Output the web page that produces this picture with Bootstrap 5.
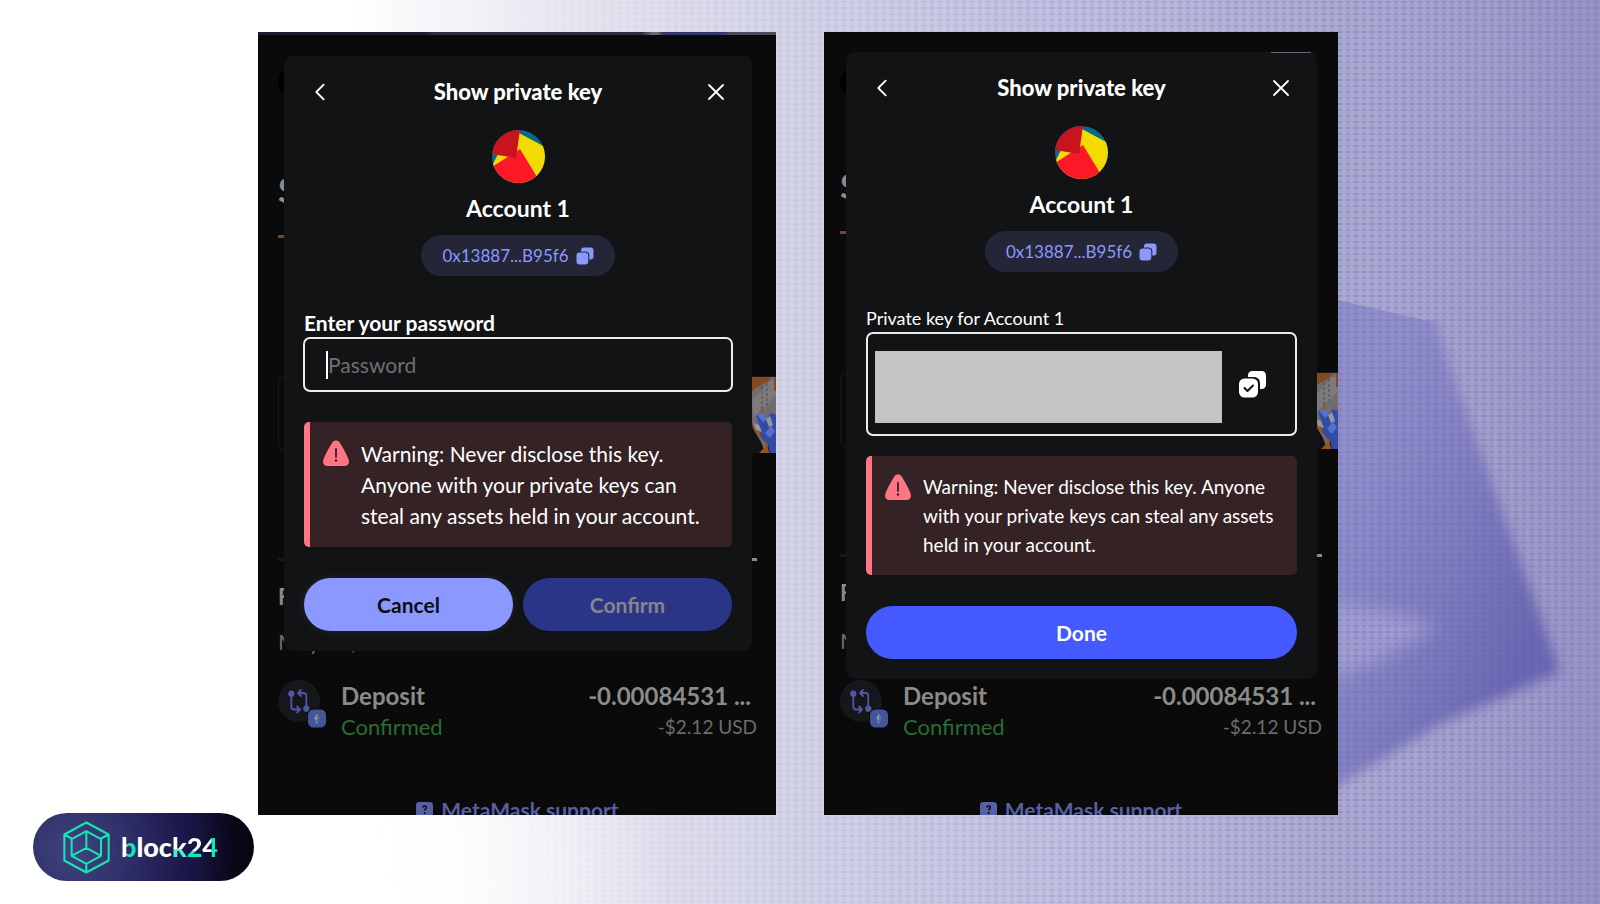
<!DOCTYPE html>
<html lang="en">
<head>
<meta charset="utf-8">
<meta name="viewport" content="width=device-width, initial-scale=1">
<title>Show private key</title>
<link rel="stylesheet" href="https://cdn.jsdelivr.net/npm/bootstrap@5.3.0/dist/css/bootstrap.min.css">
<style>
  :root { --ink: #0a0a0a; --sheet: #121314; --violet: #8b99ff; --mint: #14e8b5; }
  body { font-family: Lato, "Open Sans", sans-serif; background: #fff; }
  .page { height: 100vh; min-height: 840px; isolation: isolate; }
  .backdrop-art { z-index: -1; }
  .stage { padding: 32px 16.375% 0 16.125%; gap: 48px; min-height: 0; }

  /* phone panels: wallet screen and dialog share one grid cell */
  .panel { display: grid; grid-template: minmax(0, 1fr) / minmax(0, 1fr); background: var(--ink); overflow: hidden; flex: 518 1 0; }
  .panel > * { grid-area: 1 / 1; }
  .panel-key { flex-grow: 514; }
  .wallet { padding: 0 19px 0 20px; color: #8b8b8b; font-size: 22px; }
  .panel-key .wallet { padding: 0 16px; }
  .strip { height: 3px; margin: 0 -20px; background: linear-gradient(90deg, #1a1c33 0 32%, #2b2f45 34% 74%, #6a6a70 76% 77%, #35386a 78% 90%, #4a4c5c 91%); }
  .panel-key .strip { background: none; }
  .menu-dot { width: 30px; height: 30px; margin-top: 32px; background: #000; }
  .heading { font-size: 34px; line-height: 40px; margin-top: 73px; }
  .panel-key .heading { margin-top: 69px; }
  .tab-mark { width: 60px; height: 3px; margin-top: 25px; background: #7a4526; }
  .asset { height: 76px; margin: 138px -19px 0 0; border: 1px solid #17181c; border-right: 0; border-radius: 8px 0 0 8px; }
  .asset svg { width: 43px; height: 76px; }
  .panel-key .asset { margin-right: -16px; }
  .divider { height: 3px; margin-top: 106px; background: linear-gradient(90deg, #17181c 50%, #8b8b8b 50%); }
  .section-name { line-height: 30px; margin-top: 21px; }
  .day { line-height: 30px; margin-top: 15px; color: #6c6c70; }
  .panel-key .day { margin-top: 18px; }
  .entry { margin-top: 23px; gap: 21px; }
  .panel-key .entry { margin-top: 24px; }
  .tx-icon { width: 42px; height: 42px; overflow: visible; }
  .entry-line { line-height: 31px; }
  .entry-title { font-size: 24px; }
  .entry-amount { padding-right: 6px; }
  .entry-state { color: #2b6b35; }
  .entry-fiat { font-size: 19px; color: #6c6c70; }
  .support { margin-top: 53px; gap: 8px; font-size: 21px; line-height: 30px; color: #5660a6; text-decoration: none; }

  .sheet { align-self: start; margin: 24px 24px 0 26px; padding: 16px 20px 20px; background: var(--sheet); color: #fff; border-radius: 9px; position: relative; }
  .panel-key .sheet { margin: 20px 21px 0 22px; }
  .sheen { position: absolute; top: 0; right: 6px; width: 40px; height: 1px; background: #6c6a78; }
  .sheet-head { height: 40px; }
  .sheet-title { font-size: 22px; font-weight: 900; }
  .icon-btn { width: 32px; height: 32px; padding: 0; border: 0; background: none; color: #fff; line-height: 1; }
  .icon-btn svg { display: block; margin: auto; }
  .avatar { width: 53px; height: 53px; margin-top: 18px; }
  .account { font-size: 23px; line-height: 36px; margin: 7px 0 1px; }
  .address { height: 41px; margin-top: 8px; padding: 0 21px; gap: 7px; border: 0; border-radius: 21px; background: #242638; color: var(--violet); font-size: 17px; }
  .field-label { margin: 34px 0 1px; font-size: 21px; line-height: 26px; font-weight: 700; }
  .panel-key .field-label { margin-top: 33px; font-size: 18px; font-weight: 400; }
  .field { border: 2px solid #ececec; border-radius: 7px; margin: 0 -1px; }
  .panel-key .field { margin: 0; }
  .secret-field { height: 55px; padding: 0 21px; }
  .caret { width: 2px; height: 28px; background: #fff; }
  .secret-field input { font-size: 21px; color: #fff; background: none; border: 0; padding: 0; outline: 0; min-width: 0; }
  .secret-field input::placeholder { color: #706f73; }
  .key-field { height: 104px; padding: 17px 27px 11px 7px; }
  .key-field input { height: 72px; min-width: 0; border: 0; background: #c4c4c4; }
  .copy-key { margin-left: 14px; margin-bottom: 6px; }
  .warning { margin-top: 30px; padding: 16px 16px 16px 13px; gap: 12px; border-left: 6px solid #ff7584; border-radius: 5px; background: #352225; font-size: 21px; line-height: 31px; }
  .panel-key .warning { margin-top: 20px; font-size: 19px; line-height: 29px; }
  .warning svg { margin-top: 2px; }
  .actions { margin-top: 31px; gap: 10px; }
  .pill-btn { height: 53px; border: 0; border-radius: 27px; font-size: 21px; font-weight: 700; padding: 0; }
  .pill-cancel, .pill-cancel:hover { background: var(--violet); color: #0c0d12; box-shadow: 0 0 8px #8b99ff22; }
  .pill-confirm:disabled { background: #2b3587; color: #85868c; opacity: 1; }
  .pill-done, .pill-done:hover { background: #4459ff; color: #fff; }

  .foot { height: 89px; padding: 0 0 23px 33px; }
  .brand { width: 221px; height: 68px; padding-left: 30px; gap: 11px; border-radius: 34px; text-decoration: none; font-size: 27px; font-weight: 900; color: #fff;
    background: linear-gradient(90deg, transparent 74%, #08060f 98%), radial-gradient(circle at 18% 55%, #42437f 0, #2f2f69 30%, #1b184b 60%, #0d0a2c 95%); }
  .brand span span { background-clip: text; -webkit-background-clip: text; color: transparent; }
  .ch-b { background-image: linear-gradient(90deg, #fff 34%, var(--mint) 42%); }
  .ch-k { background-image: linear-gradient(#fff 56%, #4deec8 60%); }
  .ch-2 { background-image: linear-gradient(#fff 62%, var(--mint) 66%); }
  .ch-4 { background-image: linear-gradient(90deg, #fff 56%, var(--mint) 60%); }
</style>
</head>
<body>
<div class="page d-flex flex-column position-relative overflow-hidden">

  <svg class="backdrop-art position-absolute top-0 start-0 w-100 h-100" viewBox="0 0 1600 904" preserveAspectRatio="none" aria-hidden="true">
    <defs>
      <linearGradient id="wash" gradientUnits="userSpaceOnUse" x1="350" y1="0" x2="1610" y2="0">
        <stop offset="0" stop-color="#fff"/><stop offset=".2" stop-color="#e3e3ef"/><stop offset=".38" stop-color="#d1d1e6"/>
        <stop offset=".55" stop-color="#c1c1df"/><stop offset=".76" stop-color="#adadd3"/><stop offset=".88" stop-color="#a3a1cb"/><stop offset="1" stop-color="#9693c5"/>
      </linearGradient>
      <linearGradient id="shape" gradientUnits="userSpaceOnUse" x1="1330" y1="520" x2="1540" y2="600">
        <stop offset="0" stop-color="#918fcb"/><stop offset=".5" stop-color="#827fc0"/><stop offset="1" stop-color="#6b68b3"/>
      </linearGradient>
      <linearGradient id="fade" x1="0" x2="1" y1="0" y2="0"><stop offset=".3" stop-color="#000"/><stop offset=".85" stop-color="#fff"/></linearGradient>
      <mask id="weaveMask"><rect width="1600" height="904" fill="url(#fade)"/></mask>
      <pattern id="weave" width="16" height="6" patternUnits="userSpaceOnUse">
        <path d="M1 2h5M9 2h6" stroke="#5f5ca8" stroke-opacity=".2" stroke-width="2"/>
        <path d="M4 0v6M12 0v6" stroke="#5f5ca8" stroke-opacity=".1" stroke-width="3"/>
      </pattern>
      <filter id="soft" x="-10%" y="-10%" width="120%" height="120%"><feGaussianBlur stdDeviation="6"/></filter>
      <filter id="softer" x="-30%" y="-30%" width="160%" height="160%"><feGaussianBlur stdDeviation="9"/></filter>
      <radialGradient id="corner"><stop offset="0" stop-color="#fff"/><stop offset=".4" stop-color="#fff" stop-opacity=".8"/><stop offset="1" stop-color="#fff" stop-opacity="0"/></radialGradient>
      <clipPath id="shapeTop"><path d="M1200 282 1338 300 1424 320 1640 320V904H1200Z"/></clipPath>
    </defs>
    <rect width="1600" height="904" fill="url(#wash)"/>
    <ellipse cx="340" cy="904" rx="330" ry="420" fill="url(#corner)"/>
    <g clip-path="url(#shapeTop)">
      <path d="M1250 280H1424L1450 368 1560 672 1440 724 1340 784 1320 800H1250Z" fill="url(#shape)" filter="url(#soft)"/>
      <path d="M1290 594 1400 614 1440 626 1380 660 1300 690Z" fill="#a9a7d4" opacity=".7" filter="url(#softer)"/>
    </g>
    <g mask="url(#weaveMask)"><rect width="1600" height="904" fill="url(#weave)"/></g>
  </svg>

  <svg class="d-none" aria-hidden="true">
    <symbol id="i-back" viewBox="0 0 24 24"><path d="M16 4 8 12l8 8" fill="none" stroke="currentColor" stroke-width="2" stroke-linecap="round" stroke-linejoin="round"/></symbol>
    <symbol id="i-close" viewBox="0 0 24 24"><path d="M5 5 19 19M19 5 5 19" fill="none" stroke="currentColor" stroke-width="1.8" stroke-linecap="round"/></symbol>
    <symbol id="i-avatar" viewBox="0 0 53 53">
      <path d="M0 0h53v53H0z" fill="#07698c"/>
      <path d="M27 3 53 17V53H0V36L6 24 20 10Z" fill="#f3da03"/>
      <path d="M0 37 17 26 28 19 45 47 40 53H0Z" fill="#fc1927"/>
      <path d="M28 0 24 28 0 24V0Z" fill="#c8141e"/>
    </symbol>
    <symbol id="i-copy" viewBox="0 0 18 18"><path d="M5 4.500V3.500C5 1.500 6 .5 8 .5h6.500c2 0 3 1 3 3v6c0 2-1 3-3 3h-1.200V8.500c0-3-1.300-4-4-4Z" fill="currentColor"/><rect x=".5" y="5.500" width="11.800" height="12" rx="3.200" fill="currentColor"/></symbol>
    <symbol id="i-copied" viewBox="0 0 27 27"><path d="M9 6V5c0-3.500 1.500-5 5-5h8c3.500 0 5 1.500 5 5v8c0 3.500-1.500 5-5 5h-1v-5c0-5-2-7-7-7Z" fill="currentColor"/><rect y="7.500" width="19" height="19" rx="5.500" fill="currentColor"/><path d="m5.500 17 3 3 5.500-5.500" fill="none" stroke="#121314" stroke-width="2" stroke-linecap="round" stroke-linejoin="round"/></symbol>
    <symbol id="i-warn" viewBox="0 0 26 26"><path d="M9.600 2C11 0 15 0 16.400 2c3 4.500 6.500 11 8.800 16.500C27 22.500 25.500 26 21.500 26h-17C.5 26-1 22.500.8 18.500 3.100 13 6.600 6.500 9.600 2Z" fill="#ff7584"/><path d="M13 9v8" stroke="#352225" stroke-width="1.800" stroke-linecap="round"/><circle cx="13" cy="20.500" r="1.200" fill="#352225"/></symbol>
    <symbol id="i-tx" viewBox="0 0 50 50">
      <circle cx="21" cy="21" r="21" fill="#16171d"/>
      <g fill="none" stroke="#5058a0" stroke-width="1.800" stroke-linecap="round" stroke-linejoin="round">
        <path d="M13.300 14v12.500c0 2 1 3 3 3H22M19 26.500l3 3-3 3M28.300 28.500V16c0-2-1-3-3-3H20M23 10l-3 3 3 3"/>
      </g>
      <circle cx="13.300" cy="13.700" r="3.100" fill="#5058a0"/><circle cx="28.300" cy="28.700" r="3.100" fill="#5058a0"/>
      <rect x="29" y="28.500" width="20" height="20" rx="6.500" fill="#0a0a0a"/>
      <rect x="30" y="29.500" width="18" height="18" rx="5.500" fill="#43569c"/>
      <path d="m39 33.500-3 5 3 2zM39 41.500l-2.600-1.800L39 44z" fill="#8f96ab"/><path d="m39 33.500 3 5-3 2zM39 41.500l2.600-1.800L39 44z" fill="#66719b"/>
    </symbol>
    <symbol id="i-help" viewBox="0 0 17 17"><path d="M3.500 0h10C16 0 17 1 17 3.500v8c0 2.500-1 3.500-3.500 3.500H11l-2.500 2L6 15H3.500C1 15 0 14 0 11.500v-8C0 1 1 0 3.500 0Z" fill="#5660a6"/><path d="M6.800 5.500C7 3.300 10.400 3.400 10.300 5.500 10.300 7 8.600 6.900 8.600 8.600" fill="none" stroke="#0a0a0a" stroke-width="1.500"/><circle cx="8.600" cy="11" r="1" fill="#0a0a0a"/></symbol>
    <symbol id="i-art" viewBox="0 0 24 76">
      <path d="M0 0h24v76H0z" fill="#6f6d70"/><path d="M0 24 18 4h6v14L2 40z" fill="#7c7a7d"/><path d="M10 9v26M15 6v22" stroke="#4c4b50" stroke-dasharray="3 2"/>
      <path d="M0 0h19C17 7 6 7 0 15Z" fill="#85481f"/><path d="M22 0h2v14h-2z" fill="#85481f"/>
      <path d="M0 46C3 60 11 62 12 76H0Z" fill="#111216"/><path d="M13 58l4 18h7V55Z" fill="#1b1f30"/>
      <path d="M0 48c2 11 16 15 13 22L7 76h10l-2-6c4-6 1-11-5-15-5-3-7-4-10-7Z" fill="#9a531c"/>
      <path d="M4 39c4-4 8-3 10 3l5-6 5 2v38h-6l-2-9C9 62 7 58 8 50Z" fill="#344ba4"/>
      <path d="M5 38c4-3 8-2 10 4l-4 3ZM13 56l6-7 4 5-5 7Z" fill="#5870c9"/>
      <path d="M2 46l5 2 3 7-6-2ZM14 42l4-3 3 9-4 2Z" fill="#9696a0"/><path d="M8 35l2-5 2 6Z" fill="#a1561c"/>
    </symbol>
  </svg>

  <main class="stage d-flex flex-grow-1">

    <section class="panel">
      <div class="wallet d-flex flex-column">
        <div class="strip flex-shrink-0"></div>
        <div class="menu-dot rounded-circle flex-shrink-0"></div>
        <div class="heading fw-bold">S</div>
        <div class="tab-mark flex-shrink-0"></div>
        <div class="asset d-flex justify-content-end flex-shrink-0"><svg viewBox="0 0 24 76" preserveAspectRatio="xMaxYMid meet"><use href="#i-art"/></svg></div>
        <div class="divider flex-shrink-0"></div>
        <div class="section-name fw-bold">F</div>
        <div class="day">May 14, 2024</div>
        <div class="entry d-flex">
          <svg class="tx-icon flex-shrink-0" viewBox="0 0 42 42"><use href="#i-tx" width="50" height="50"/></svg>
          <div class="flex-grow-1">
            <div class="entry-line d-flex justify-content-between fw-bold entry-title"><span>Deposit</span><span class="entry-amount">-0.00084531 ...</span></div>
            <div class="entry-line d-flex justify-content-between"><span class="entry-state">Confirmed</span><span class="entry-fiat">-$2.12 USD</span></div>
          </div>
        </div>
        <a href="#" class="support d-flex align-items-center justify-content-center fw-bold"><svg width="17" height="17"><use href="#i-help"/></svg>MetaMask support</a>
      </div>

      <form class="sheet">
        <div class="sheet-head d-flex align-items-center justify-content-between">
          <button type="button" class="icon-btn" aria-label="Back"><svg width="22" height="22"><use href="#i-back"/></svg></button>
          <h1 class="sheet-title m-0">Show private key</h1>
          <button type="button" class="icon-btn" aria-label="Close"><svg width="24" height="24"><use href="#i-close"/></svg></button>
        </div>
        <div class="d-flex flex-column align-items-center">
          <svg class="avatar rounded-circle"><use href="#i-avatar"/></svg>
          <div class="account fw-bold">Account 1</div>
          <button type="button" class="address d-flex align-items-center">0x13887...B95f6 <svg width="18" height="18"><use href="#i-copy"/></svg></button>
        </div>
        <label class="field-label d-block" for="password">Enter your password</label>
        <div class="field secret-field d-flex align-items-center"><span class="caret"></span><input id="password" class="flex-grow-1" type="password" placeholder="Password"></div>
        <div class="warning d-flex align-items-start" role="alert">
          <svg class="flex-shrink-0" width="26" height="26"><use href="#i-warn"/></svg>
          <span>Warning: Never disclose this key. Anyone with your private keys can steal any assets held in your account.</span>
        </div>
        <div class="actions d-flex">
          <button type="button" class="btn pill-btn pill-cancel w-50">Cancel</button>
          <button type="submit" class="btn pill-btn pill-confirm w-50" disabled>Confirm</button>
        </div>
      </form>
    </section>

    <section class="panel panel-key">
      <div class="wallet d-flex flex-column">
        <div class="strip flex-shrink-0"></div>
        <div class="menu-dot rounded-circle flex-shrink-0"></div>
        <div class="heading fw-bold">S</div>
        <div class="tab-mark flex-shrink-0"></div>
        <div class="asset d-flex justify-content-end flex-shrink-0"><svg viewBox="0 0 24 76" preserveAspectRatio="xMaxYMid meet"><use href="#i-art"/></svg></div>
        <div class="divider flex-shrink-0"></div>
        <div class="section-name fw-bold">F</div>
        <div class="day">May 14, 2024</div>
        <div class="entry d-flex">
          <svg class="tx-icon flex-shrink-0" viewBox="0 0 42 42"><use href="#i-tx" width="50" height="50"/></svg>
          <div class="flex-grow-1">
            <div class="entry-line d-flex justify-content-between fw-bold entry-title"><span>Deposit</span><span class="entry-amount">-0.00084531 ...</span></div>
            <div class="entry-line d-flex justify-content-between"><span class="entry-state">Confirmed</span><span class="entry-fiat">-$2.12 USD</span></div>
          </div>
        </div>
        <a href="#" class="support d-flex align-items-center justify-content-center fw-bold"><svg width="17" height="17"><use href="#i-help"/></svg>MetaMask support</a>
      </div>

      <form class="sheet">
        <span class="sheen"></span>
        <div class="sheet-head d-flex align-items-center justify-content-between">
          <button type="button" class="icon-btn" aria-label="Back"><svg width="22" height="22"><use href="#i-back"/></svg></button>
          <h2 class="sheet-title m-0">Show private key</h2>
          <button type="button" class="icon-btn" aria-label="Close"><svg width="24" height="24"><use href="#i-close"/></svg></button>
        </div>
        <div class="d-flex flex-column align-items-center">
          <svg class="avatar rounded-circle"><use href="#i-avatar"/></svg>
          <div class="account fw-bold">Account 1</div>
          <button type="button" class="address d-flex align-items-center">0x13887...B95f6 <svg width="18" height="18"><use href="#i-copy"/></svg></button>
        </div>
        <label class="field-label d-block" for="key">Private key for Account 1</label>
        <div class="field key-field d-flex align-items-center">
          <input id="key" class="flex-grow-1" type="text" readonly>
          <button type="button" class="icon-btn copy-key" aria-label="Copied"><svg width="27" height="27"><use href="#i-copied"/></svg></button>
        </div>
        <div class="warning d-flex align-items-start" role="alert">
          <svg class="flex-shrink-0" width="26" height="26"><use href="#i-warn"/></svg>
          <span>Warning: Never disclose this key. Anyone with your private keys can steal any assets held in your account.</span>
        </div>
        <div class="actions d-flex">
          <button type="button" class="btn pill-btn pill-done w-100">Done</button>
        </div>
      </form>
    </section>
  </main>

  <footer class="foot d-flex align-items-end flex-shrink-0">
    <a href="#" class="brand d-flex align-items-center flex-shrink-0">
      <svg width="47" height="53" viewBox="130 62 141 158" fill="none" stroke="#14e8b5" stroke-width="6" stroke-linejoin="round">
        <path d="M200 66 267 102V180L200 216 134 180V102ZM200 92 244 116V166L200 190 156 166V116ZM200 92V142L156 166M200 142 244 166M134 102 156 114M267 102 244 114M200 216V190"/>
      </svg>
      <span><span class="ch-b">b</span>loc<span class="ch-k">k</span><span class="ch-2">2</span><span class="ch-4">4</span></span>
    </a>
  </footer>
</div>
<script src="https://cdn.jsdelivr.net/npm/bootstrap@5.3.0/dist/js/bootstrap.bundle.min.js"></script>
</body>
</html>
